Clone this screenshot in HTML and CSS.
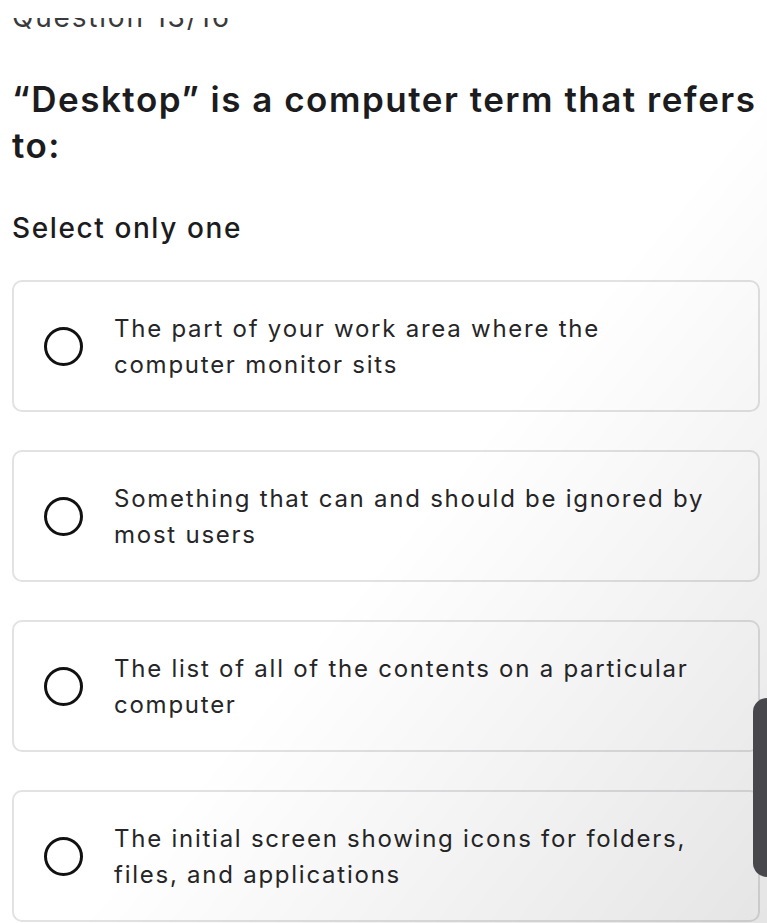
FILE: index.html
```html
<!DOCTYPE html>
<html lang="en">
<head>
  <meta charset="UTF-8">
  <meta name="viewport" content="width=device-width, initial-scale=1.0">
  <title>Quiz</title>
  <link rel="stylesheet" href="styles.css">
</head>
<body>
  <div class="top-cover"></div>

  <main class="quiz">
    <div class="counter">Question 13/16</div>
    <h1 class="question">“Desktop” is a computer term that refers to:</h1>
    <div class="hint">Select only one</div>

    <div class="options">
      <label class="option">
        <span class="radio"></span>
        <span class="option-text">The part of your work area where the computer monitor sits</span>
      </label>
      <label class="option">
        <span class="radio"></span>
        <span class="option-text">Something that can and should be ignored by most users</span>
      </label>
      <label class="option">
        <span class="radio"></span>
        <span class="option-text">The list of all of the contents on a particular computer</span>
      </label>
      <label class="option">
        <span class="radio"></span>
        <span class="option-text">The initial screen showing icons for folders, files, and applications</span>
      </label>
    </div>
  </main>

  <!-- 右下の影と右端のつまみ -->
  <div class="shade"></div>
  <div class="side-handle"></div>
</body>
</html>
```

FILE: styles.css
```css
  * {
    margin: 0;
    padding: 0;
    box-sizing: border-box;
  }

  body {
    background-color: #ffffff;
    font-family: Inter, "Noto Sans", sans-serif;
    color: #1c1c1e;
    overflow: hidden;
  }

  .top-cover {
    position: fixed;
    top: 0;
    left: 0;
    right: 0;
    height: 18px;
    background-color: #ffffff;
    z-index: 2;
  }

  .quiz {
    padding: 0 7px 0 12px;
  }

  .counter {
    font-size: 28px;
    line-height: 30px;
    margin-top: 2px;
    letter-spacing: 1.8px;
    color: #3a3a3c;
  }

  .question {
    margin-top: 44px;
    font-size: 35px;
    line-height: 46px;
    font-weight: 600;
    letter-spacing: 1.5px;
  }

  .hint {
    margin-top: 44px;
    font-size: 28px;
    line-height: 32px;
    font-weight: 500;
    letter-spacing: 1.6px;
  }

  .options {
    display: flex;
    flex-direction: column;
    gap: 38px;
    margin-top: 36px;
  }

  .option {
    display: flex;
    align-items: center;
    gap: 31px;
    padding: 29px 40px 27px 30px;
    border: 2px solid #e2e2e4;
    border-radius: 10px;
    background-color: #ffffff;
  }

  .radio {
    flex: none;
    width: 39px;
    height: 39px;
    margin-top: -2px;
    border: 3px solid #111111;
    border-radius: 50%;
  }

  .option-text {
    font-size: 24px;
    line-height: 36px;
    letter-spacing: 1.75px;
    color: #262628;
  }

  .shade {
    position: fixed;
    inset: 0;
    pointer-events: none;
    background: linear-gradient(to bottom right, rgba(0, 0, 0, 0) 55%, rgba(0, 0, 0, 0.1) 100%);
  }

  .side-handle {
    position: fixed;
    top: 698px;
    right: 0;
    width: 14px;
    height: 179px;
    background-color: #48484c;
    border-radius: 14px 0 0 14px;
  }
```
